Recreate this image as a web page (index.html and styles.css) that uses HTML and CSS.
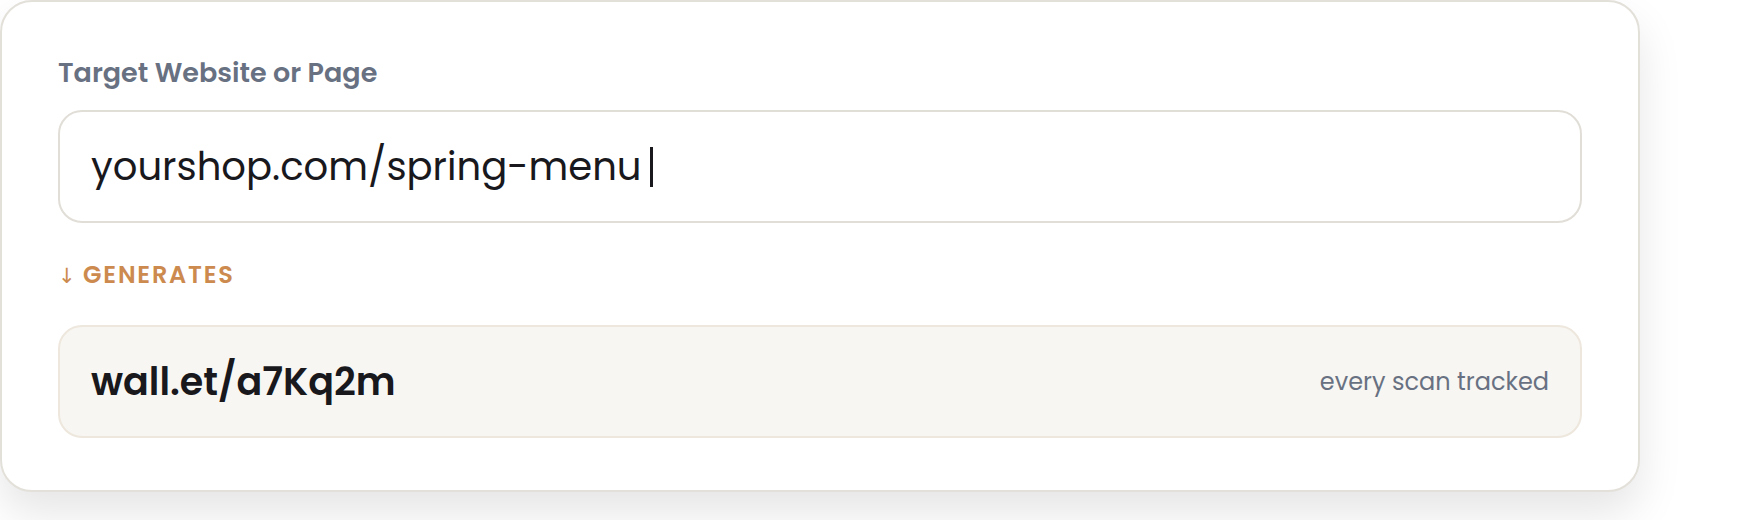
FILE: index.html
```html
<!DOCTYPE html>
<html>
<head>
    <meta charset="UTF-8">
    <meta name="viewport" content="width=device-width, initial-scale=1.0">
    <title>Short Link Generator</title>
    <link rel="stylesheet" href="styles.css">
</head>
<body>
    <div class="card">
        <div class="field-label">Target Website or Page</div>

        <div class="url-input">
            <span class="url-text">yourshop.com/spring-menu</span>
            <span class="caret"></span>
        </div>

        <div class="generates"><span class="arrow">&darr;</span> GENERATES</div>

        <div class="short-link">
            <span class="short-url">wall.et/a7Kq2m</span>
            <span class="short-note">every scan tracked</span>
        </div>
    </div>
</body>
</html>
```

FILE: styles.css
```css
body {
    margin: 0;
    min-height: 520px;
    background-color: white;
    font-family: Poppins, Inter, "Noto Sans", sans-serif;
}

.card {
    width: 1524px;
    margin: 0;
    padding: 52px 56px 52px 56px;
    background-color: white;
    border: 2px solid #e3e0d9;
    border-radius: 32px;
    box-shadow: 0 22px 44px rgba(0, 0, 0, 0.1);
}

.field-label {
    font-size: 27px;
    font-weight: 600;
    line-height: 38px;
    color: #687182;
    margin-bottom: 18px;
}

.url-input {
    display: flex;
    align-items: center;
    height: 109px;
    padding-left: 31px;
    border: 2px solid #e1ded7;
    border-radius: 24px;
    background-color: white;
}

.url-text {
    font-size: 38.6px;
    font-weight: 400;
    color: #18181d;
}

.caret {
    width: 3px;
    height: 40px;
    margin-left: 8px;
    background-color: #18181d;
}

.generates {
    margin-top: 37px;
    font-size: 24px;
    font-weight: 600;
    letter-spacing: 1.8px;
    line-height: 30px;
    color: #cc8a4e;
}

.arrow {
    font-family: "DejaVu Sans", sans-serif;
    font-weight: 400;
    font-size: 21px;
    letter-spacing: 0;
}

.short-link {
    display: flex;
    align-items: center;
    justify-content: space-between;
    height: 109px;
    margin-top: 34px;
    padding: 0 31px;
    background-color: #f8f6f2;
    border: 2px solid #ede7dd;
    border-radius: 24px;
}

.short-url {
    font-size: 38px;
    font-weight: 600;
    color: #18181d;
}

.short-note {
    font-size: 24px;
    color: #687182;
}
```
